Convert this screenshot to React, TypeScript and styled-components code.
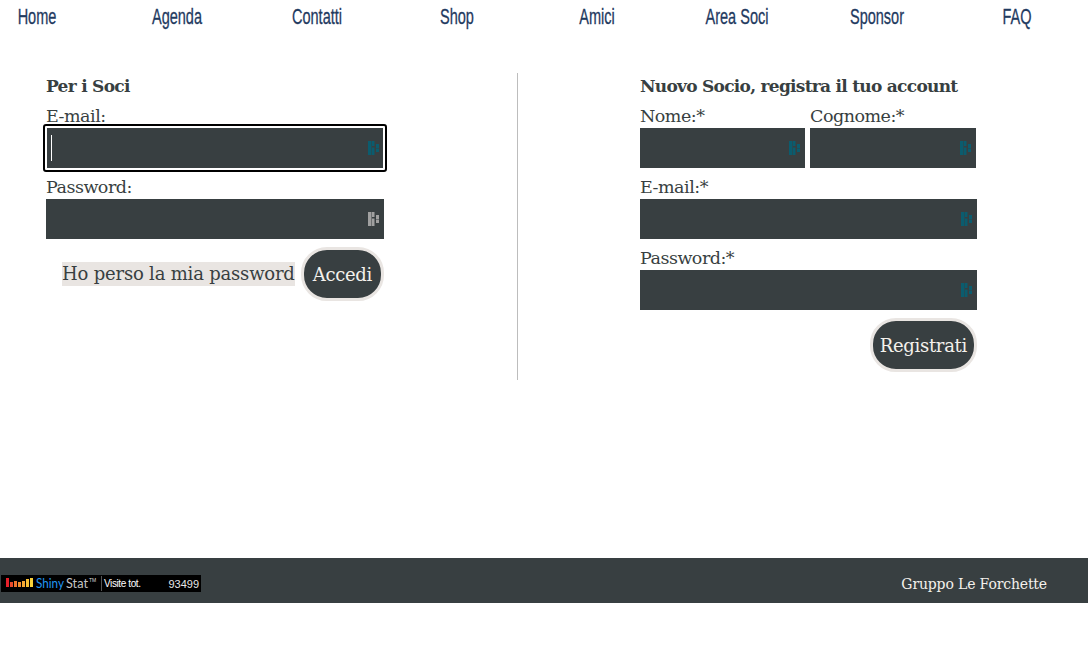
import React from 'react';
import styled, { createGlobalStyle } from 'styled-components';

const GlobalStyle = createGlobalStyle`
  html, body {
    margin: 0;
    padding: 0;
    background: #fff;
    overflow: hidden;
  }
  body {
    font-family: "DejaVu Serif", "Liberation Serif", serif;
    color: #383f41;
  }
`;

const Page = styled.div`
  width: 1088px;
  height: 650px;
  overflow: hidden;
`;

const Nav = styled.nav`
  display: grid;
  grid-template-columns: repeat(8, 140px);
  margin-left: -33px;
  height: 33px;
`;

const NavLink = styled.a`
  display: block;
  text-align: center;
  line-height: 33px;
  font-family: "Liberation Sans", sans-serif;
  font-size: 22px;
  color: #1f3a5f;
  -webkit-text-stroke: 0.3px #1f3a5f;
  transform: scaleX(0.66);
`;

const Main = styled.main`
  display: grid;
  grid-template-columns: 518px 1fr;
  margin-top: 40px;
  height: 307px;
`;

const LeftPane = styled.section`
  border-right: 1px solid #bdbdbd;
  padding-left: 46px;
`;

const RightPane = styled.section`
  padding-left: 122px;
`;

const Form = styled.form`
  width: ${p => p.$width}px;
`;

const Heading = styled.h3`
  margin: 0;
  height: 27px;
  line-height: 26px;
  font-size: 17px;
  font-weight: 700;
  letter-spacing: -0.72px;
  white-space: nowrap;
`;

const Label = styled.label`
  display: block;
  height: 28px;
  line-height: 33px;
  font-size: 17.5px;
  letter-spacing: -0.5px;
  white-space: nowrap;
`;

const Field = styled.div`
  position: relative;
  height: 40px;
  margin-bottom: 3px;
`;

const Input = styled.input`
  display: block;
  box-sizing: border-box;
  width: 100%;
  height: 40px;
  padding: 0 5px;
  border: 0;
  border-radius: 0;
  background: #383f41;
  color: #fff;
  font-family: inherit;
  font-size: 16px;
  outline: none;
`;

const Caret = styled.span`
  position: absolute;
  left: 5px;
  top: 7px;
  width: 1px;
  height: 26px;
  background: #fff;
`;

const FocusRing = styled.span`
  position: absolute;
  inset: -4px -3px;
  border: 2px solid #000;
  border-radius: 3px;
  box-shadow: inset 0 0 0 1px #fff, inset 0 0 0 2px #fff;
  pointer-events: none;
`;

const FieldIcon = styled.svg`
  position: absolute;
  right: 5px;
  top: 13px;
  width: 11px;
  height: 14px;
`;

const TwoCols = styled.div`
  display: grid;
  grid-template-columns: 165px 166px;
  column-gap: 5px;
`;

const Actions = styled.div`
  display: flex;
  justify-content: flex-end;
  align-items: center;
  gap: 6px;
  margin-top: 8px;
`;

const Forgot = styled.a`
  background: #e9e5e2;
  height: 24px;
  line-height: 24px;
  font-size: 18px;
  letter-spacing: -0.2px;
  white-space: nowrap;
`;

const Submit = styled.button`
  box-sizing: border-box;
  height: 54px;
  padding: 0 ${p => p.$pad}px;
  border: 3px solid #e9e5e2;
  border-radius: 26px;
  background: #383f41;
  color: #f4f1ec;
  font-family: inherit;
  font-size: 18px;
  letter-spacing: -0.3px;
`;

const Footer = styled.footer`
  display: flex;
  justify-content: space-between;
  align-items: center;
  box-sizing: border-box;
  height: 45px;
  margin-top: 178px;
  padding: 6px 41px 0 1px;
  background: #383f41;
`;

const FooterText = styled.span`
  color: #f4f1ec;
  font-size: 14px;
  letter-spacing: -0.15px;
`;

const Counter = styled.div`
  display: flex;
  align-items: center;
  width: 200px;
  height: 17px;
  background: #000;
  color: #fff;
  font-family: "Liberation Sans", sans-serif;
  font-size: 10px;
`;

const CounterLogo = styled.svg`
  width: 100px;
  height: 17px;
  flex: none;
`;

const LogoShiny = styled.text`
  font-family: "Lato", sans-serif;
  font-size: 12.5px;
  fill: #2196f3;
`;

const LogoStat = styled.text`
  font-family: "Lato", sans-serif;
  font-size: 12.5px;
  fill: #c4c4c4;
`;

const LogoTm = styled.text`
  font-family: "Liberation Sans", sans-serif;
  font-size: 5px;
  fill: #ddd;
`;

const CounterLabel = styled.span`
  flex: 1;
  padding-left: 2px;
  border-left: 1px solid #555;
  line-height: 15px;
  letter-spacing: -0.4px;
`;

const CounterValue = styled.span`
  padding-right: 2px;
  font-size: 11px;
  color: #e6e6e6;
`;

const PwIcon = ({ color }: { color: string }) => (
  <FieldIcon viewBox="0 0 11 14" fill={color}>
    <rect x="0" y="0" width="3.5" height="14" />
    <rect x="4" y="0" width="2.5" height="5" />
    <rect x="4" y="6.5" width="2.5" height="7.5" />
    <rect x="8" y="3" width="3" height="4" />
    <rect x="8" y="7.5" width="3" height="3.5" />
  </FieldIcon>
);

const TextField = ({ focused, iconColor = '#0b5c6e' }: { focused?: boolean; iconColor?: string }) => (
  <Field>
    <Input />
    {focused && <FocusRing />}
    {focused && <Caret />}
    <PwIcon color={iconColor} />
  </Field>
);

const bars = [
  ['#e5202a', 5, 9],
  ['#ea4b2b', 9, 5],
  ['#f0752d', 13, 6],
  ['#f4902f', 17, 5],
  ['#f6a832', 21, 6],
  ['#f8c035', 25, 8],
  ['#fad23a', 29, 9],
] as const;

const menu = ['Home', 'Agenda', 'Contatti', 'Shop', 'Amici', 'Area Soci', 'Sponsor', 'FAQ'];

export default function App() {
  return (
    <Page>
      <GlobalStyle />
      <Nav>
        {menu.map(item => (
          <NavLink key={item}>{item}</NavLink>
        ))}
      </Nav>
      <Main>
        <LeftPane>
          <Form $width={338}>
            <Heading>Per i Soci</Heading>
            <Label>E-mail:</Label>
            <TextField focused />
            <Label>Password:</Label>
            <TextField iconColor="#a0a0a0" />
            <Actions>
              <Forgot>Ho perso la mia password</Forgot>
              <Submit type="button" $pad={9}>Accedi</Submit>
            </Actions>
          </Form>
        </LeftPane>
        <RightPane>
          <Form $width={337}>
            <Heading>Nuovo Socio, registra il tuo account</Heading>
            <TwoCols>
              <div>
                <Label>Nome:*</Label>
                <TextField />
              </div>
              <div>
                <Label>Cognome:*</Label>
                <TextField />
              </div>
            </TwoCols>
            <Label>E-mail:*</Label>
            <TextField />
            <Label>Password:*</Label>
            <TextField />
            <Actions>
              <Submit type="button" $pad={7}>Registrati</Submit>
            </Actions>
          </Form>
        </RightPane>
      </Main>
      <Footer>
        <Counter>
          <CounterLogo viewBox="0 0 100 17">
            {bars.map(([fill, x, h]) => (
              <rect key={x} x={x} y={12 - h} width="3" height={h} fill={fill} />
            ))}
            <LogoShiny x="35" y="13" textLength="28" lengthAdjust="spacingAndGlyphs">Shiny</LogoShiny>
            <LogoStat x="65" y="13" textLength="22" lengthAdjust="spacingAndGlyphs">Stat</LogoStat>
            <LogoTm x="88" y="7">TM</LogoTm>
          </CounterLogo>
          <CounterLabel>Visite tot.</CounterLabel>
          <CounterValue>93499</CounterValue>
        </Counter>
        <FooterText>Gruppo Le Forchette</FooterText>
      </Footer>
    </Page>
  );
}
